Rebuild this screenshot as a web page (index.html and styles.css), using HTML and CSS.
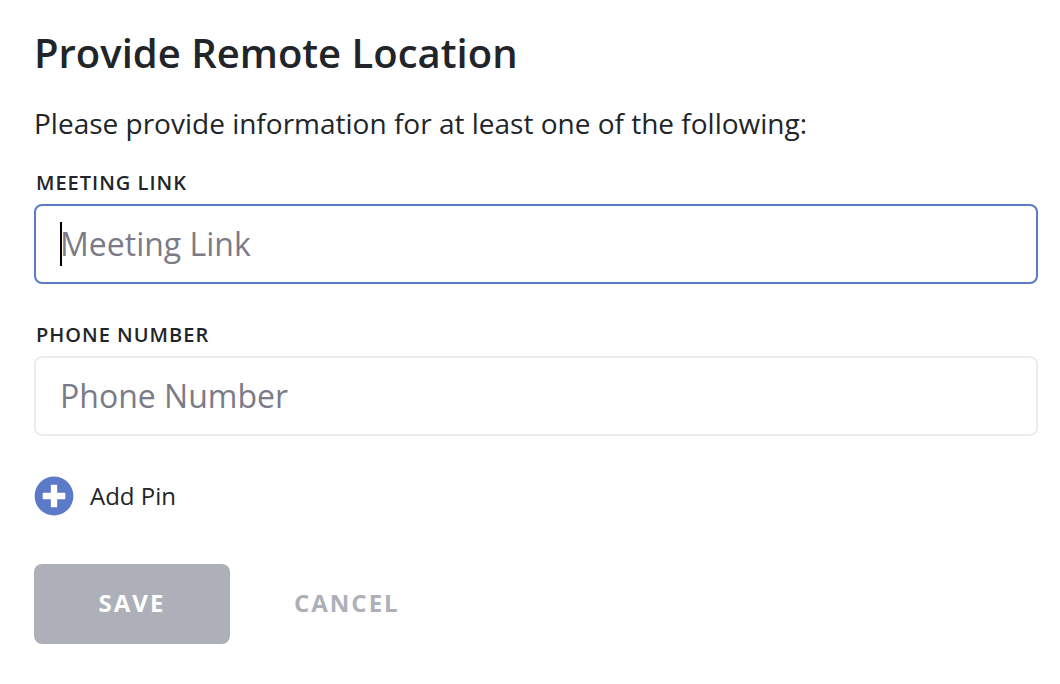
FILE: index.html
```html
<!DOCTYPE html>
<html lang="en">
<head>
<meta charset="UTF-8">
<meta name="viewport" content="width=device-width, initial-scale=1.0">
<title>Provide Remote Location</title>
<link rel="stylesheet" href="styles.css">
</head>
<body>

<form class="location-form">
  <h1>Provide Remote Location</h1>
  <p class="intro">Please provide information for at least one of the following:</p>

  <div class="field">
    <label for="meetingLink">Meeting Link</label>
    <input type="text" id="meetingLink" placeholder="Meeting Link" autofocus>
  </div>

  <div class="field">
    <label for="phoneNumber">Phone Number</label>
    <input type="tel" id="phoneNumber" placeholder="Phone Number">
  </div>

  <button type="button" class="add-pin">
    <svg class="add-icon" viewBox="0 0 40 40" aria-hidden="true">
      <circle cx="20" cy="20" r="19.4" fill="#5b7ac7"/>
      <rect x="16.800" y="8.700" width="6.400" height="22.600" rx=".9" fill="#fff"/>
      <rect x="8.700" y="16.800" width="22.600" height="6.400" rx=".9" fill="#fff"/>
    </svg>
    Add Pin
  </button>

  <div class="actions">
    <button type="submit" class="save" disabled>Save</button>
    <button type="button" class="cancel">Cancel</button>
  </div>
</form>

</body>
</html>
```
FILE: styles.css
```css
* {
  box-sizing: border-box;
}
body {
  margin: 0;
  background-color: #fff;
  color: #212529;
  font-family: "Open Sans", sans-serif;
}
.location-form {
  padding: 23px 22px 40px 34px;
}
h1 {
  margin: 0;
  font-size: 40px;
  font-weight: 600;
  line-height: 60px;
}
.intro {
  margin: 20px 0 26px;
  font-size: 28px;
  line-height: 40px;
}
.field {
  margin-bottom: 37px;
}
.field label {
  display: block;
  margin-bottom: 7px;
  padding-left: 2px;
  font-size: 20px;
  font-weight: 600;
  line-height: 28px;
  letter-spacing: 1px;
  text-transform: uppercase;
}
.field input {
  display: block;
  width: 100%;
  height: 80px;
  padding: 0 24px 2px;
  border: 2px solid #ececec;
  border-radius: 8px;
  outline: none;
  background-color: #fff;
  color: #212529;
  font-family: inherit;
  font-size: 32px;
}
.field input::placeholder {
  color: #7b7b88;
  opacity: 1;
}
.field input:focus {
  border-color: #5b7ac7;
  caret-color: #000;
}
/* tall caret while the field is empty */
.field input:focus:placeholder-shown {
  caret-color: transparent;
  background: linear-gradient(#000, #000) 24px center / 2px 44px no-repeat #fff;
}
button {
  padding: 0;
  border: none;
  background-color: transparent;
  font-family: inherit;
  cursor: pointer;
}
.add-pin {
  display: flex;
  align-items: center;
  gap: 16px;
  margin-top: 40px;
  color: #212529;
  font-size: 24px;
  line-height: 40px;
}
.add-icon {
  width: 40px;
  height: 40px;
}
.actions {
  display: flex;
  gap: 64px;
  margin-top: 48px;
}
.save,
.cancel {
  height: 80px;
  padding-bottom: 3px;
  font-size: 24px;
  font-weight: 700;
  letter-spacing: 2px;
  text-transform: uppercase;
}
.save {
  min-width: 196px;
  border-radius: 8px;
  background-color: #adb0b8;
  color: #fff;
}
.cancel {
  color: #adb0b8;
}
```
